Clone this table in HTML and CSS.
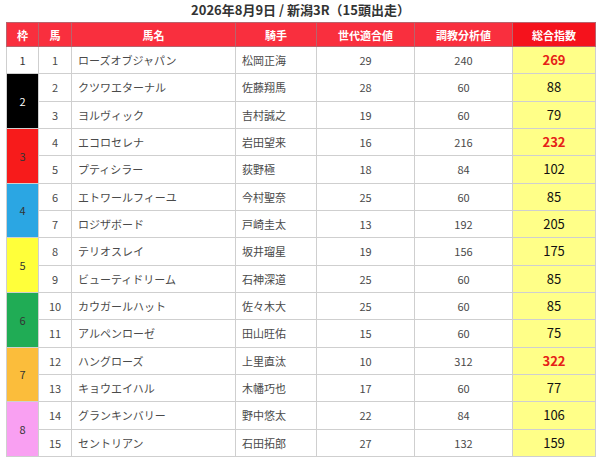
FILE: index.html
```html
<!DOCTYPE html>
<html lang="ja">
<head>
<meta charset="utf-8">
<link rel="stylesheet" href="styles.css">
</head>
<body>
<div class="page">
  <h1 class="title">2026年8月9日 / 新潟3R（15頭出走）</h1>
  <table class="race">
    <colgroup>
      <col class="c-waku"><col class="c-uma"><col class="c-name"><col class="c-jockey"><col class="c-sedai"><col class="c-chokyo"><col class="c-total">
    </colgroup>
    <thead>
      <tr>
        <th>枠</th><th>馬</th><th>馬名</th><th>騎手</th><th>世代適合値</th><th>調教分析値</th><th class="th-total">総合指数</th>
      </tr>
    </thead>
    <tbody>
      <tr><td class="waku w1">1</td><td class="num">1</td><td class="txt">ローズオブジャパン</td><td class="txt">松岡正海</td><td class="num">29</td><td class="num">240</td><td class="total hi">269</td></tr>
      <tr><td class="waku w2" rowspan="2">2</td><td class="num">2</td><td class="txt">クツワエターナル</td><td class="txt">佐藤翔馬</td><td class="num">28</td><td class="num">60</td><td class="total">88</td></tr>
      <tr><td class="num">3</td><td class="txt">ヨルヴィック</td><td class="txt">吉村誠之</td><td class="num">19</td><td class="num">60</td><td class="total">79</td></tr>
      <tr><td class="waku w3" rowspan="2">3</td><td class="num">4</td><td class="txt">エコロセレナ</td><td class="txt">岩田望来</td><td class="num">16</td><td class="num">216</td><td class="total hi">232</td></tr>
      <tr><td class="num">5</td><td class="txt">プティシラー</td><td class="txt">荻野極</td><td class="num">18</td><td class="num">84</td><td class="total">102</td></tr>
      <tr><td class="waku w4" rowspan="2">4</td><td class="num">6</td><td class="txt">エトワールフィーユ</td><td class="txt">今村聖奈</td><td class="num">25</td><td class="num">60</td><td class="total">85</td></tr>
      <tr><td class="num">7</td><td class="txt">ロジザボード</td><td class="txt">戸崎圭太</td><td class="num">13</td><td class="num">192</td><td class="total">205</td></tr>
      <tr><td class="waku w5" rowspan="2">5</td><td class="num">8</td><td class="txt">テリオスレイ</td><td class="txt">坂井瑠星</td><td class="num">19</td><td class="num">156</td><td class="total">175</td></tr>
      <tr><td class="num">9</td><td class="txt">ビューティドリーム</td><td class="txt">石神深道</td><td class="num">25</td><td class="num">60</td><td class="total">85</td></tr>
      <tr><td class="waku w6" rowspan="2">6</td><td class="num">10</td><td class="txt">カウガールハット</td><td class="txt">佐々木大</td><td class="num">25</td><td class="num">60</td><td class="total">85</td></tr>
      <tr><td class="num">11</td><td class="txt">アルペンローゼ</td><td class="txt">田山旺佑</td><td class="num">15</td><td class="num">60</td><td class="total">75</td></tr>
      <tr><td class="waku w7" rowspan="2">7</td><td class="num">12</td><td class="txt">ハングローズ</td><td class="txt">上里直汰</td><td class="num">10</td><td class="num">312</td><td class="total hi">322</td></tr>
      <tr><td class="num">13</td><td class="txt">キョウエイハル</td><td class="txt">木幡巧也</td><td class="num">17</td><td class="num">60</td><td class="total">77</td></tr>
      <tr><td class="waku w8" rowspan="2">8</td><td class="num">14</td><td class="txt">グランキンバリー</td><td class="txt">野中悠太</td><td class="num">22</td><td class="num">84</td><td class="total">106</td></tr>
      <tr><td class="num">15</td><td class="txt">セントリアン</td><td class="txt">石田拓郎</td><td class="num">27</td><td class="num">132</td><td class="total">159</td></tr>
    </tbody>
  </table>
</div>
</body>
</html>
```

FILE: styles.css
```css
html, body {
  margin: 0;
  padding: 0;
  background: #ffffff;
}
body {
  font-family: "Noto Sans CJK JP", "Noto Sans", sans-serif;
  color: #444;
}
.page {
  padding: 0 6px;
}
.title {
  margin: 0;
  height: 22px;
  line-height: 20px;
  font-size: 13px;
  font-weight: bold;
  text-align: center;
  color: #333;
}
.race {
  border-collapse: collapse;
  table-layout: fixed;
  width: 589px;
}
.c-waku { width: 32px; }
.c-uma { width: 33px; }
.c-name { width: 164px; }
.c-jockey { width: 81px; }
.c-sedai { width: 98px; }
.c-chokyo { width: 98px; }
.c-total { width: 83px; }

.race th {
  height: 23px;
  padding: 0;
  background: #f92f3e;
  color: #fff;
  font-size: 11px;
  font-weight: bold;
  border: 1px solid #b8636d;
  line-height: 14px;
}
.race th.th-total {
  background: #f5121c;
}
.race td {
  height: 26.33px;
  padding: 0;
  border: 1px solid #cfcfcf;
  font-size: 11px;
  line-height: 14px;
  color: #4a4a4a;
}
.race td.num,
.race td.waku {
  text-align: center;
}
.race td.txt {
  padding-left: 6px;
  white-space: nowrap;
}
.race td.waku {
  color: #333;
}
.race td.total {
  background: #ffff88;
  text-align: center;
  font-size: 13px;
  color: #111;
}
.race td.total.hi {
  color: #e62117;
  font-weight: bold;
}
.w1 { background: #ffffff; }
.w2 { background: #000000; color: #fff !important; }
.w3 { background: #f71b1b; }
.w4 { background: #2ba6e3; }
.w5 { background: #ffff3a; }
.w6 { background: #20ac55; }
.w7 { background: #fbbd3b; }
.w8 { background: #f9a0f2; }
```
